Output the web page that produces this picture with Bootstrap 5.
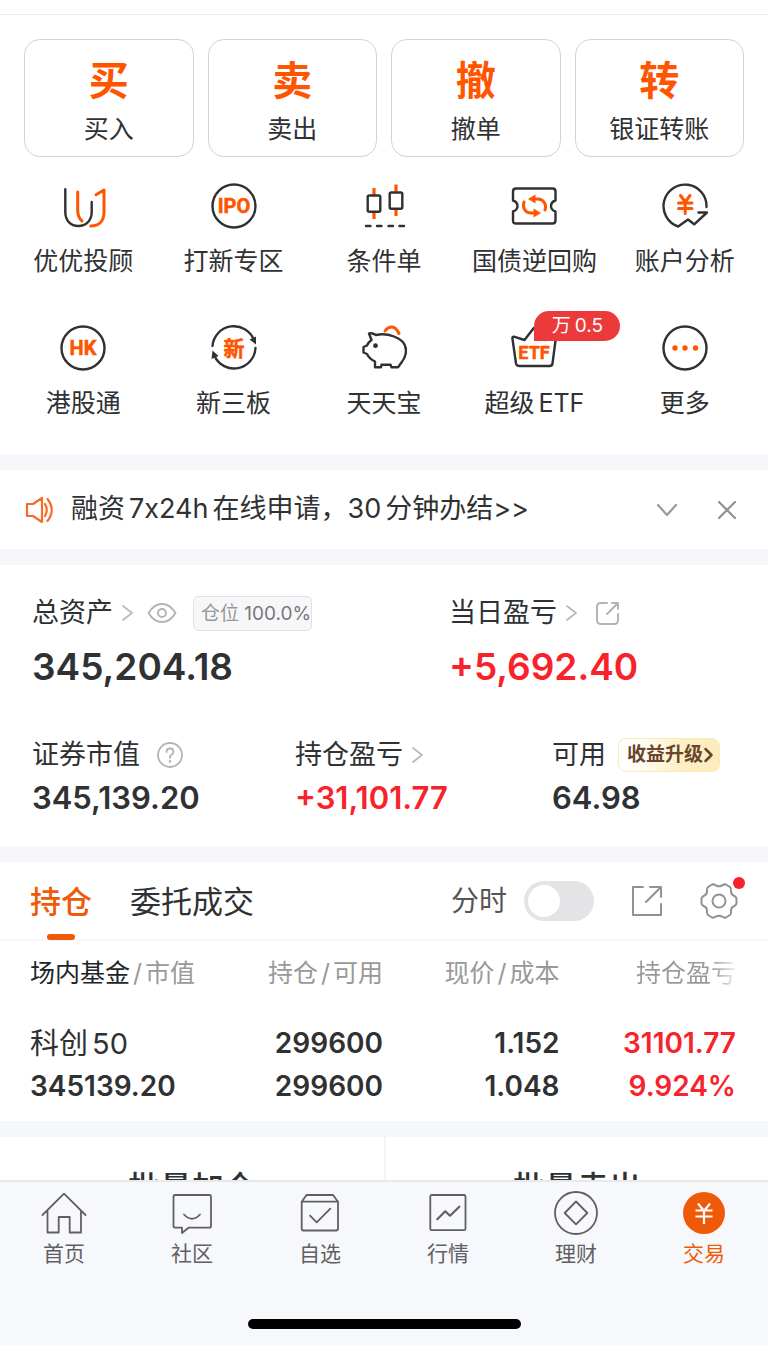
<!DOCTYPE html>
<html lang="zh-CN">
<head>
<meta charset="utf-8">
<meta name="viewport" content="width=device-width, initial-scale=1">
<title>交易</title>
<link href="https://cdn.jsdelivr.net/npm/bootstrap@5.3.0/dist/css/bootstrap.min.css" rel="stylesheet">
<style>
:root{--ink:#303133;--orange:#ff5500;--tab:#ee5a08;--red:#f8232a;--band:#f6f7fa;--soft:#999}
body{font-family:Inter,"Noto Sans CJK SC",sans-serif;color:var(--ink);background:#fff}
a{color:inherit;text-decoration:none}
button{color:inherit}
svg{display:block;flex:none;fill:none;stroke-linecap:round;stroke-linejoin:round}
.scroller{min-height:0;overflow-y:auto;scrollbar-width:none}
.scroller::-webkit-scrollbar{display:none}
.topline{height:15px;border-bottom:1px solid #ebebed}
.section-band{border-top:16px solid var(--band)}
.trade-grid{padding:24px 24px 0;gap:14px}
.trade-btn{flex:1 1 0;height:118px;border:1px solid #d3d3d5;border-radius:16px;background:#fff;padding:8px 0 0}
.trade-btn b{display:block;font-size:40px;line-height:44px;font-weight:700;color:var(--orange)}
.trade-btn span{display:block;font-size:25px;line-height:32px;margin-top:10px}
.tool-grid{padding:26px 8px 35px;display:grid;grid-template-columns:repeat(5,1fr);row-gap:48px}
.tool{display:flex;flex-direction:column;align-items:center;font-size:25px;line-height:32px;gap:16px;white-space:nowrap;position:relative}
.tool svg{stroke:var(--ink);stroke-width:2.4}
.tool .o{stroke:var(--orange)}
.tool text{fill:var(--orange);stroke:var(--orange);stroke-width:.5;font-family:Roboto,"Noto Sans CJK SC",sans-serif;font-weight:700;text-anchor:middle}
.promo{position:absolute;left:50%;top:-14px;width:86px;height:30px;border-radius:15px 15px 15px 0;background:#ec3a3c;color:#fff;font-size:19px;line-height:30px;text-align:center}
.notice{height:79px;padding:0 30px 0 25px}
.notice .msg{font-size:27px;margin-left:17px}
.notice-btns{gap:38px}
.assets{padding:30px 32px 30px}
.lbl{font-size:27px;line-height:36px;height:36px;white-space:nowrap}
.big{font-size:37px;line-height:48px;font-weight:600;margin-top:12px}
.mid{font-size:31px;line-height:36px;font-weight:600;margin-top:7px}
.row-gap-top{margin-top:46px}
.up{color:var(--red)}
.eye{margin-left:12px}
.pos-tag{font-size:19px;line-height:33px;border:1px solid #e2e2e6;background:#f7f7fa;border-radius:5px;color:#77787a;padding:0 0 0 7px;margin-left:16px}
.pos-tag span{color:#96979a}
.col-a{flex:0 0 263px}.col-b{flex:0 0 257px}.col-top{flex:0 0 417px}
.upgrade{font-size:19px;line-height:32px;height:34px;font-weight:700;color:#69452c;border:1px solid #fbebb0;border-radius:8px;padding:0 5px 0 8px;margin-left:12px;background:linear-gradient(100deg,#fff 15%,#fdeec3 65%,#fcebbd)}
.tabs{height:79px;padding:0 30px;border-bottom:2px solid #f7f7f8;font-size:31px}
.tab-item{height:77px;line-height:80px;position:relative;margin-right:38px}
.tab-item.active{color:var(--tab);font-weight:500}
.tab-item.active::after{content:"";position:absolute;left:50%;bottom:-1px;width:28px;height:6px;margin-left:-14px;border-radius:3px;background:var(--tab)}
.minute-lbl{font-size:28px;color:#555}
.switch{appearance:none;width:70px;height:40px;border-radius:20px;background:#e4e4e6;margin:0 0 0 17px;padding:4px}
.switch::before{content:"";display:block;width:32px;height:32px;border-radius:50%;background:#fff}
.switch:checked{background:var(--tab)}
.switch:checked::before{margin-left:auto}
.gear{position:relative;margin-left:36px}
.gear i{position:absolute;right:-7px;top:-5px;width:12px;height:12px;border-radius:50%;background:#fa2026}
.holdings-wrap{padding:0 32px 0 30px}
.holdings{width:100%;table-layout:fixed}
.holdings th{font-size:25px;line-height:36px;padding:14px 0 31px;font-weight:400;color:var(--soft);text-align:right;white-space:nowrap}
.holdings td{font-size:28px;line-height:43px;padding:0 0 13px;font-weight:600;text-align:right}
.holdings th:first-child,.holdings td:first-child{text-align:left}
.holdings .name{font-size:29px;font-weight:400;white-space:nowrap}
.slash{margin:0 3px}
.fade-end{background:linear-gradient(90deg,var(--soft) 75%,#eee);-webkit-background-clip:text;background-clip:text;color:transparent}
.batch button{height:102px;font-size:32px;line-height:40px;font-weight:500;background:#fff}
.batch button+button{border-left:2px solid #f3f4f6!important}
.bottom{background:#f7f8fb;border-top:2px solid #e7e8eb;padding-top:8px}
.bottom a{flex:1 1 0;display:flex;flex-direction:column;align-items:center;font-size:21px;line-height:28px;gap:4px;color:#606063}
.bottom svg{stroke:#606063;stroke-width:1.8}
.bottom a.on{color:var(--tab)}
.home-bar{width:273px;height:10px;border-radius:5px;background:#000;margin:51px auto 16px}
</style>
<script src="https://cdn.jsdelivr.net/npm/bootstrap@5.3.0/dist/js/bootstrap.bundle.min.js"></script>
</head>
<body class="d-flex flex-column vh-100 overflow-hidden">
<main class="scroller flex-grow-1">
  <div class="topline"></div>
  <div class="trade-grid d-flex">
    <button type="button" class="trade-btn"><b>买</b><span>买入</span></button>
    <button type="button" class="trade-btn"><b>卖</b><span>卖出</span></button>
    <button type="button" class="trade-btn"><b>撤</b><span>撤单</span></button>
    <button type="button" class="trade-btn"><b>转</b><span>银证转账</span></button>
  </div>
  <nav class="tool-grid" aria-label="功能">
    <a class="tool" href="#"><svg width="46" height="46"><path d="M5.3 6.3V29C5.300 38 11 43 18.300 43S31.700 38 31.700 29V19"/><path class="o" stroke-width="3" d="M17.700 9V27C17.700 32 19 35.500 22 38M36 11.700 44 7V29C44 38 39 43 30.700 43"/></svg>优优投顾</a>
    <a class="tool" href="#"><svg width="46" height="46"><circle cx="23" cy="23" r="21.500"/><text x="23" y="30" font-size="20">IPO</text></svg>打新专区</a>
    <a class="tool" href="#"><svg width="46" height="46"><path class="o" stroke-width="3.200" stroke-linecap="butt" d="M13 5v7M13 29v7M35 1.500v7M35 26v7"/><rect x="6.700" y="12.500" width="12.600" height="16.200" rx="1.500"/><rect x="28.700" y="9.500" width="12.600" height="16.200" rx="1.500"/><path d="M5 43h4.500M16 43h4.500M27.500 43h4.500M38.500 43h4.500"/></svg>条件单</a>
    <a class="tool" href="#"><svg width="46" height="46"><path d="M5 5.500H41.500Q44.500 5.500 44.500 8.500V17.500Q40 19 40 23T44.500 28.500V37.500Q44.500 40.500 41.500 40.500H5Q2 40.500 2 37.500V28.500Q6.500 27 6.500 23T2 17.500V8.500Q2 5.500 5 5.500Z"/><path class="o" stroke-width="3" d="M22 16H27C32 16 36 21 34 27M25 30H20C14.500 30 11 25 13 19"/><path fill="#ff5500" stroke="none" d="M17 16 24.500 11.500V20.500ZM30 30 22.500 25.500V34.500Z"/></svg>国债逆回购</a>
    <a class="tool" href="#"><svg width="46" height="46"><path d="M44.500 24A21.500 21.500 0 1 0 16.200 43.500L26 36.500 32.200 41.300 45 29.500H36.500"/><path class="o" stroke-width="3" d="M18.500 12.500 23.200 19 28 12.500M16.500 20H30M16.500 25.500H30M23.200 20V30.500"/></svg>账户分析</a>
    <a class="tool" href="#"><svg width="46" height="46"><circle cx="23" cy="23" r="21.500"/><text x="23" y="30" font-size="20">HK</text></svg>港股通</a>
    <a class="tool" href="#"><svg width="46" height="46"><path d="M1.500 21A21.500 21.500 0 0 1 43 15M44.500 23A21.500 21.500 0 0 1 3.500 31"/><path fill="#303133" stroke="none" d="M38.500 14.500 45 11.500 45 19.500ZM7.500 31 .5 34 1.500 25.500Z"/><text x="23" y="30.500" font-size="21">新</text></svg>新三板</a>
    <a class="tool" href="#"><svg width="46" height="46"><path d="M8 8.500Q11 7.500 15 10Q24 8 33 11.500C41 14.500 45 19 45 25.500Q45 32 40.500 37.500L37 42.300H30.500L29.500 39.700H20.500L20 42.300H14V36.500Q8.500 34 6 29L2.500 27.500V22L6 20.500Q7.500 17 10.500 15Z"/><circle cx="14.500" cy="20.700" r="2.400" fill="#303133" stroke="none"/><path class="o" stroke-width="3" d="M24 6Q27 1.700 31 2T38 8.500"/></svg>天天宝</a>
    <a class="tool" href="#"><svg width="46" height="46"><path d="M3 11.700 13.500 15 22.800 3 33 15 43 11.700Q45 11.500 44.700 14L41.500 38.500Q41.200 41 38.500 41H8.500Q5.500 41 5 38.500L1.500 14Q1 11.500 3 11.700Z"/><text x="23" y="34" font-size="18">ETF</text></svg><span>超级<span class="ms-1">ETF</span></span><span class="promo">万<span class="ms-1">0.5</span></span></a>
    <a class="tool" href="#"><svg width="46" height="46"><circle cx="23" cy="23" r="21.500"/><g fill="#ff5500" stroke="none"><circle cx="13" cy="23" r="2.700"/><circle cx="23" cy="23" r="2.700"/><circle cx="33.500" cy="23" r="2.700"/></g></svg>更多</a>
  </nav>

  <section class="section-band">
    <div class="notice d-flex align-items-center">
      <svg width="29" height="30" stroke="#f96a28" stroke-width="2.200"><path d="M2 9H8L17 3V27L8 21H2ZM20 9Q23.500 15 20 21M22.500 4Q31 15 22.500 26"/></svg>
      <span class="msg">融资<span class="mx-1">7x24h</span>在线申请，<span class="me-1">30</span>分钟办结&gt;&gt;</span>
      <div class="notice-btns d-flex ms-auto">
        <button type="button" class="btn p-0 border-0" aria-label="展开"><svg width="22" height="22" stroke="#999" stroke-width="2.200"><path d="M2 6 11 16 20 6"/></svg></button>
        <button type="button" class="btn p-0 border-0" aria-label="关闭"><svg width="22" height="22" stroke="#929292" stroke-width="2.200"><path d="M3 3 19 19M19 3 3 19"/></svg></button>
      </div>
    </div>
  </section>

  <section class="section-band">
    <div class="assets">
      <div class="d-flex">
        <div class="col-top">
          <div class="lbl d-flex align-items-center">总资产
            <svg class="ms-2" width="14" height="20" stroke="#bbb" stroke-width="1.800"><path d="M2 3 11 10 2 17"/></svg>
            <svg class="eye" width="30" height="22" stroke="#b4b4b6" stroke-width="2"><path d="M1.500 11Q7 2 15 2T28.500 11Q23 20 15 20T1.500 11Z"/><circle cx="15" cy="11" r="4"/></svg>
            <span class="pos-tag"><span>仓位</span> 100.0%</span>
          </div>
          <div class="big">345,204.18</div>
        </div>
        <div>
          <div class="lbl d-flex align-items-center">当日盈亏
            <svg class="ms-2" width="14" height="20" stroke="#bbb" stroke-width="1.800"><path d="M2 3 11 10 2 17"/></svg>
            <svg class="ms-3" width="26" height="26" stroke="#b4b4b6" stroke-width="2"><path d="M12 3H6Q2 3 2 7V20Q2 24 6 24H19Q23 24 23 20V14M12 14 23 3M17 3H23V9"/></svg>
          </div>
          <div class="big up">+5,692.40</div>
        </div>
      </div>
      <div class="d-flex row-gap-top">
        <div class="col-a">
          <div class="lbl d-flex align-items-center">证券市值
            <svg class="ms-3" width="28" height="28" stroke="#b4b4b6" stroke-width="1.800"><circle cx="14" cy="14" r="12"/><path d="M10.500 11Q10.500 7.500 14 7.500T17.500 11Q17.500 12.500 15.500 13.700T14 17"/><circle cx="14" cy="20.500" r=".5"/></svg>
          </div>
          <div class="mid">345,139.20</div>
        </div>
        <div class="col-b">
          <div class="lbl d-flex align-items-center">持仓盈亏
            <svg class="ms-2" width="14" height="20" stroke="#bbb" stroke-width="1.800"><path d="M2 3 11 10 2 17"/></svg>
          </div>
          <div class="mid up">+31,101.77</div>
        </div>
        <div>
          <div class="lbl d-flex align-items-center">可用
            <a href="#" class="upgrade d-flex align-items-center">收益升级<svg width="11" height="20" stroke="#69452c" stroke-width="2.500"><path d="M2.500 4 8.500 10 2.500 16"/></svg></a>
          </div>
          <div class="mid">64.98</div>
        </div>
      </div>
    </div>
  </section>

  <section class="section-band">
    <div class="tabs d-flex align-items-center">
      <a class="tab-item active" href="#">持仓</a>
      <a class="tab-item" href="#">委托成交</a>
      <label class="ms-auto minute-lbl" for="minute">分时</label>
      <input id="minute" type="checkbox" class="switch" role="switch">
      <button type="button" class="btn p-0 border-0 gear" aria-label="分享"><svg width="34" height="34" stroke="#929294" stroke-width="2"><path d="M13 3H3V31H31V20M16 18 31 3M20 3H31V13"/></svg></button>
      <button type="button" class="btn p-0 border-0 gear" aria-label="设置"><svg width="38" height="38" stroke="#929294" stroke-width="2"><path d="M12 2.500Q14 2 16 3.500Q19 5 22 3.500Q24 2 26 2.500L30 5Q31.500 6.500 31 9Q31 12.500 33.500 13.500Q36 14.500 36.500 16.500V21.500Q36 23.500 33.500 24.500Q31 25.500 31 29Q31.500 31.500 30 33L26 35.500Q24 36 22 34.500Q19 33 16 34.500Q14 36 12 35.500L8 33Q6.500 31.500 7 29Q7 25.500 4.500 24.500Q2 23.500 1.500 21.500V16.500Q2 14.500 4.500 13.500Q7 12.500 7 9Q6.500 6.500 8 5Z"/><circle cx="19" cy="19" r="6.500"/></svg><i></i></button>
    </div>
    <div class="holdings-wrap">
      <table class="holdings">
        <colgroup><col style="width:28%"><col style="width:22%"><col style="width:25%"><col style="width:25%"></colgroup>
        <thead><tr><th><span class="text-dark">场内基金</span><span class="slash">/</span>市值</th><th>持仓<span class="slash">/</span>可用</th><th>现价<span class="slash">/</span>成本</th><th><span class="fade-end">持仓盈亏</span></th></tr></thead>
        <tbody><tr>
          <td><div class="name">科创<span class="ms-1">50</span></div><div>345139.20</div></td>
          <td><div>299600</div><div>299600</div></td>
          <td><div>1.152</div><div>1.048</div></td>
          <td class="up"><div>31101.77</div><div>9.924%</div></td>
        </tr></tbody>
      </table>
    </div>
  </section>

  <section class="section-band">
    <div class="batch d-flex">
      <button type="button" class="border-0 w-50">批量加仓</button>
      <button type="button" class="border-0 w-50">批量卖出</button>
    </div>
  </section>
</main>

<footer class="bottom">
  <nav class="d-flex" aria-label="主导航">
    <a href="#"><svg width="46" height="46"><path d="M1.500 25 23 3.700 44.500 25M6.500 21V42.500H17.700V27H28.700V42.500H40V21"/></svg>首页</a>
    <a href="#"><svg width="46" height="46"><path d="M6 5H40.500Q42 5 42 6.500V36Q42 37.700 40.500 37.700H19.500L13 43V37.700H6Q4.500 37.700 4.500 36V6.500Q4.500 5 6 5ZM15 24.500Q23 33 31 24.500"/></svg>社区</a>
    <a href="#"><svg width="46" height="46"><path d="M9.500 5H36L41 11.700V38.500Q41 40.500 39 40.500H6.500Q4.700 40.500 4.700 38.500V11.700ZM4.700 11.700H41M13 25.700 19.700 32.300 33.300 18.700"/></svg>自选</a>
    <a href="#"><svg width="46" height="46"><rect x="5.300" y="5" width="35.200" height="35.200" rx="1.500"/><path stroke-width="2.200" d="M12.300 29.300 20.300 21.300 25 25.700 34.300 16.700"/></svg>行情</a>
    <a href="#"><svg width="46" height="46"><circle cx="23" cy="23" r="21"/><path d="M23 11.500 34.300 23 23 34.300 11.700 23Z"/></svg>理财</a>
    <a href="#" class="on"><svg width="46" height="46"><circle cx="23" cy="23" r="21" fill="#ee5a08" stroke="none"/><path stroke="#fff" stroke-width="2.200" stroke-linecap="butt" d="M17 13.500 23 21 29 13.500M14.500 20.500H31.500M14.500 26.500H31.500M23 20.500V34"/></svg>交易</a>
  </nav>
  <div class="home-bar"></div>
</footer>
</body>
</html>
